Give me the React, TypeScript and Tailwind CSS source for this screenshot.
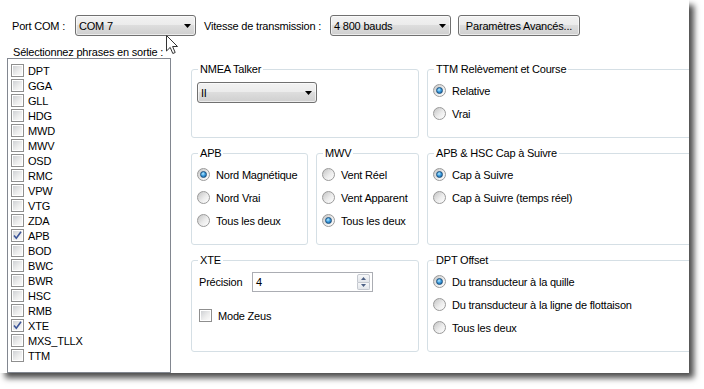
import React from "react";

const font = "font-['Liberation_Sans',Arial,sans-serif] text-[11px] tracking-[-0.2px] text-black";

function Arrow() {
  return (
    <svg width="7" height="4" viewBox="0 0 7 4" className="shrink-0">
      <path d="M0 0H7L3.5 4Z" fill="#000" />
    </svg>
  );
}

function Combo({ text, className }: { text: string; className: string }) {
  return (
    <div
      className={
        "flex items-center h-[21px] rounded-[3px] border border-[#707070] bg-[linear-gradient(#f2f2f2_0%,#ebebeb_50%,#dddddd_50%,#cfcfcf_100%)] shadow-[inset_0_0_0_1px_rgba(255,255,255,0.6)] pl-[3px] pr-[4px] " +
        className
      }
    >
      <span className="flex-1 leading-[14px]">{text}</span>
      <Arrow />
    </div>
  );
}

function Check({ checked }: { checked?: boolean }) {
  return (
    <span className="relative shrink-0 w-[13px] h-[13px] border border-[#8f8f8f] bg-white p-[1px] flex">
      <span className="flex-1 bg-[linear-gradient(135deg,#cfd1d4,#eeeeee_60%,#fafafa)]" />
      {checked && (
        <svg width="11" height="11" viewBox="0 0 11 11" className="absolute left-[0px] top-[0px]">
          <path d="M2 5.5L4.3 8.2L9 1.8" fill="none" stroke="#3c5598" strokeWidth="1.6" />
        </svg>
      )}
    </span>
  );
}

function Radio({ label, checked }: { label: string; checked?: boolean }) {
  return (
    <div className="flex items-center h-[23px]">
      <span className="shrink-0 w-[13px] h-[13px] rounded-full border border-[#9a9a9a] bg-[linear-gradient(135deg,#c4c4c4,#ececec_55%,#ffffff)] flex items-center justify-center">
        {checked && (
          <span className="w-[7px] h-[7px] rounded-full border border-[#1b4f7c] bg-[radial-gradient(circle_at_40%_35%,#b9ecff_0%,#3d9de0_45%,#0f5a97_100%)]" />
        )}
      </span>
      <span className="ml-[6px] leading-[14px]">{label}</span>
    </div>
  );
}

function Group({
  title,
  className,
  children,
}: {
  title: string;
  className: string;
  children?: React.ReactNode;
}) {
  return (
    <fieldset className={"min-w-0 border border-[#d5dfe5] rounded-[3px] px-[5px] " + className}>
      <legend className="ml-[1px] px-[2px] leading-[14px]">{title}</legend>
      {children}
    </fieldset>
  );
}

const phrases: [string, boolean][] = [
  ["DPT", false],
  ["GGA", false],
  ["GLL", false],
  ["HDG", false],
  ["MWD", false],
  ["MWV", false],
  ["OSD", false],
  ["RMC", false],
  ["VPW", false],
  ["VTG", false],
  ["ZDA", false],
  ["APB", true],
  ["BOD", false],
  ["BWC", false],
  ["BWR", false],
  ["HSC", false],
  ["RMB", false],
  ["XTE", true],
  ["MXS_TLLX", false],
  ["TTM", false],
];

function Spin() {
  return (
    <div className="flex items-center w-[121px] h-[20px] border border-[#abadb3] bg-white pl-[3px] pr-[2px]">
      <span className="flex-1 leading-[14px]">4</span>
      <div className="flex flex-col w-[13px] h-[16px]">
        <div className="flex-1 flex items-center justify-center border border-[#c5c9d0] rounded-t-[2px] bg-[linear-gradient(#f6f7f9,#e3e6ea)]">
          <svg width="5" height="3" viewBox="0 0 5 3">
            <path d="M0 3H5L2.5 0Z" fill="#4d6185" />
          </svg>
        </div>
        <div className="flex-1 flex items-center justify-center border border-t-0 border-[#c5c9d0] rounded-b-[2px] bg-[linear-gradient(#f6f7f9,#e3e6ea)]">
          <svg width="5" height="3" viewBox="0 0 5 3">
            <path d="M0 0H5L2.5 3Z" fill="#4d6185" />
          </svg>
        </div>
      </div>
    </div>
  );
}

export default function App() {
  return (
    <div className={"relative w-[704px] h-[389px] bg-white " + font}>
      <div className="w-[689px] h-[373px] bg-white overflow-hidden shadow-[5px_5px_6px_rgba(0,0,0,0.7)] flex flex-col">
        {/* top row */}
        <div className="flex items-center h-[21px] mt-[15px] pl-[12px]">
          <span className="w-[63px] leading-[14px]">Port COM :</span>
          <Combo text="COM 7" className="w-[121px]" />
          <span className="ml-[8px] w-[126px] leading-[14px]">Vitesse de transmission :</span>
          <Combo text="4 800 bauds" className="w-[121px]" />
          <button className="ml-[7px] w-[122px] h-[21px] rounded-[3px] border border-[#707070] bg-[linear-gradient(#f2f2f2_0%,#ebebeb_50%,#dddddd_50%,#cfcfcf_100%)] shadow-[inset_0_0_0_1px_rgba(255,255,255,0.6)] leading-[14px]">
            Paramètres Avancés...
          </button>
        </div>
        <div className="mt-[10px] h-[12px] leading-[12px] pl-[13px]">Sélectionnez phrases en sortie :</div>
        {/* body */}
        <div className="flex items-start">
          <div className="ml-[7px] w-[164px] h-[315px] shrink-0 border border-[#828790] pt-[4px] pl-[3px]">
            {phrases.map(([p, c]) => (
              <div key={p} className="flex items-center h-[15px]">
                <Check checked={c} />
                <span className="ml-[4px] leading-[14px]">{p}</span>
              </div>
            ))}
          </div>
          <div className="ml-[20px] mt-[4px] grid grid-cols-[228px_290px] gap-[8px] shrink-0">
            <Group title="NMEA Talker" className="h-[76px]">
              <div className="pt-[6px]">
                <Combo text="II" className="w-[120px]" />
              </div>
            </Group>
            <Group title="TTM Relèvement et Course" className="h-[76px]">
              <div className="pt-[3px]">
                <Radio label="Relative" checked />
                <Radio label="Vrai" />
              </div>
            </Group>
            <div className="flex gap-[8px]">
              <Group title="APB" className="h-[99px] w-[117px]">
                <div className="pt-[3px]">
                  <Radio label="Nord Magnétique" checked />
                  <Radio label="Nord Vrai" />
                  <Radio label="Tous les deux" />
                </div>
              </Group>
              <Group title="MWV" className="h-[99px] w-[103px]">
                <div className="pt-[3px]">
                  <Radio label="Vent Réel" />
                  <Radio label="Vent Apparent" />
                  <Radio label="Tous les deux" checked />
                </div>
              </Group>
            </div>
            <Group title="APB & HSC Cap à Suivre" className="h-[99px]">
              <div className="pt-[3px]">
                <Radio label="Cap à Suivre" checked />
                <Radio label="Cap à Suivre (temps réel)" />
              </div>
            </Group>
            <Group title="XTE" className="h-[99px]">
              <div className="pt-[5px] flex items-center">
                <span className="ml-[2px] w-[53px] leading-[14px]">Précision</span>
                <Spin />
              </div>
              <div className="mt-[16px] flex items-center h-[15px] pl-[2px]">
                <Check />
                <span className="ml-[6px] leading-[14px]">Mode Zeus</span>
              </div>
            </Group>
            <Group title="DPT Offset" className="h-[99px]">
              <div className="pt-[3px]">
                <Radio label="Du transducteur à la quille" checked />
                <Radio label="Du transducteur à la ligne de flottaison" />
                <Radio label="Tous les deux" />
              </div>
            </Group>
          </div>
        </div>
      </div>
      {/* mouse cursor */}
      <svg
        width="13"
        height="20"
        viewBox="0 0 13 20"
        className="absolute left-[166px] top-[35px]"
      >
        <path
          d="M0.5 0.5V16L4.2 12.4L6.8 18.5L9.2 17.5L6.6 11.5H11.5Z"
          fill="#fff"
          stroke="#333"
          strokeWidth="1"
          strokeLinejoin="round"
        />
      </svg>
    </div>
  );
}
